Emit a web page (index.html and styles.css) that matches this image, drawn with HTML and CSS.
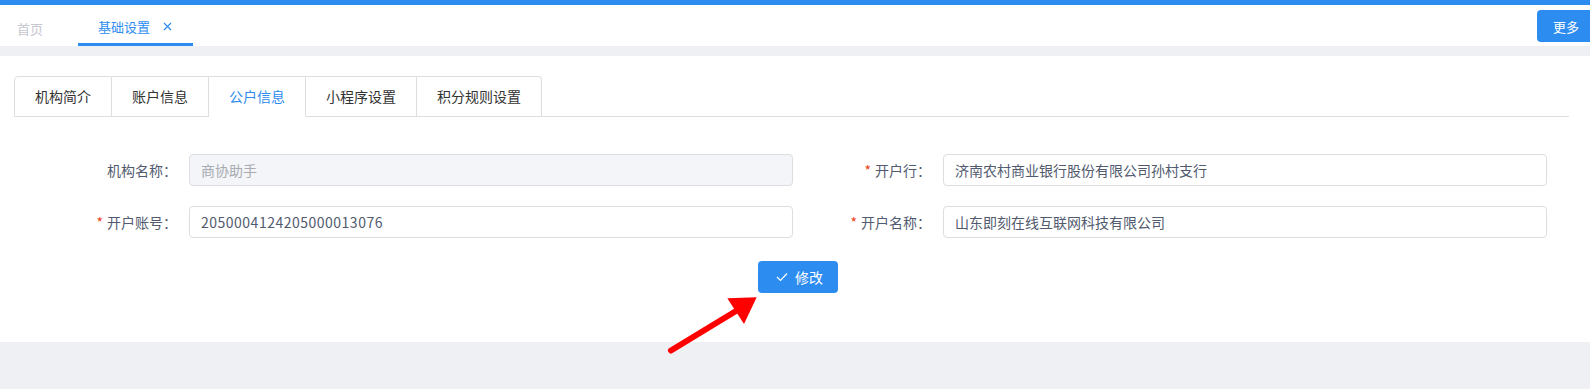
FILE: index.html
```html
<!DOCTYPE html>
<html lang="zh-CN">

<head>
    <meta charset="UTF-8">
    <meta name="viewport" content="width=device-width, initial-scale=1.0">
    <title>基础设置</title>
    <link rel="stylesheet" href="styles.css">
</head>

<body>
    <div class="ligne-haut"></div>

    <div class="barre-onglets">
        <div class="onglets-nav">
            <a class="onglet-accueil">首页</a>
            <a class="onglet-page actif">基础设置
                <svg class="icone-fermer" width="9" height="9" viewBox="0 0 9 9">
                    <path d="M1 1 L8 8 M8 1 L1 8" stroke="#2d8cf0" stroke-width="1.2" fill="none" />
                </svg>
            </a>
        </div>
        <button class="bouton-plus">更多</button>
    </div>

    <div class="contenu">
        <div class="panneau">
            <div class="onglets-carte">
                <div class="onglet">机构简介</div>
                <div class="onglet">账户信息</div>
                <div class="onglet actif">公户信息</div>
                <div class="onglet">小程序设置</div>
                <div class="onglet">积分规则设置</div>
            </div>

            <form class="formulaire">
                <div class="champ">
                    <label class="etiquette">机构名称：</label>
                    <input class="saisie" type="text" value="商协助手" disabled>
                </div>
                <div class="champ">
                    <label class="etiquette requis">开户行：</label>
                    <input class="saisie" type="text" value="济南农村商业银行股份有限公司孙村支行">
                </div>
                <div class="champ">
                    <label class="etiquette requis">开户账号：</label>
                    <input class="saisie chiffres" type="text" value="2050004124205000013076">
                </div>
                <div class="champ">
                    <label class="etiquette requis">开户名称：</label>
                    <input class="saisie" type="text" value="山东即刻在线互联网科技有限公司">
                </div>
            </form>

            <div class="actions">
                <button class="bouton-modifier" type="button">
                    <svg width="12" height="10" viewBox="0 0 12 10">
                        <path d="M1 5 L4.5 8.5 L11 1.5" stroke="#fff" stroke-width="1.2" fill="none" />
                    </svg>
                    修改
                </button>
            </div>
        </div>
    </div>

    <!-- flèche rouge d'annotation posée sur la capture -->
    <svg class="fleche" width="110" height="70" viewBox="0 0 110 70">
        <path d="M11 60.5 L76 21" stroke="#ff0000" stroke-width="6" stroke-linecap="round" fill="none" />
        <polygon points="96.7,7.3 67.3,8.3 84,34" fill="#ff0000" />
    </svg>
</body>

</html>
```

FILE: styles.css
```css
html {
    background-color: #eef0f4;
}

body {
    font-family: "Noto Sans CJK SC", "Liberation Sans", sans-serif;
    background-color: #eef0f4;
    margin: 0;
    padding: 0;
    position: relative;
    min-height: 389px;
    color: #515a6e;
}

.ligne-haut {
    height: 5px;
    background-color: #2d8cf0;
}

.barre-onglets {
    display: flex;
    justify-content: space-between;
    height: 41px;
    background-color: #fff;
}

.onglets-nav {
    display: flex;
}

.onglet-accueil,
.onglet-page {
    display: flex;
    align-items: center;
    box-sizing: border-box;
    height: 41px;
    padding-top: 5px;
    font-size: 13px;
    cursor: pointer;
}

.onglet-accueil {
    padding-left: 17px;
    padding-right: 35px;
    color: #c5c8ce;
}

.onglet-page {
    padding-left: 20px;
    padding-right: 21px;
    border-bottom: 3px solid #2d8cf0;
    color: #2d8cf0;
}

.icone-fermer {
    margin-left: 13px;
}

.bouton-plus {
    margin-top: 5px;
    width: 53px;
    height: 32px;
    padding: 0 0 0 16px;
    text-align: left;
    border: none;
    border-radius: 4px 0 0 4px;
    background-color: #2d8cf0;
    color: #fff;
    font-family: inherit;
    font-size: 13px;
}

.contenu {
    padding-top: 10px;
}

.panneau {
    box-sizing: border-box;
    height: 286px;
    padding: 20px 21px 0 14px;
    background-color: #fff;
}

.onglets-carte {
    display: flex;
    height: 40px;
    border-bottom: 1px solid #dcdee2;
}

.onglet {
    box-sizing: border-box;
    height: 41px;
    padding: 0 20px;
    line-height: 39px;
    border: 1px solid #dcdee2;
    border-left: none;
    background-color: #fff;
    color: #333;
    font-size: 14px;
    cursor: pointer;
}

.onglet:first-child {
    border-left: 1px solid #dcdee2;
    border-radius: 4px 0 0 0;
}

.onglet:last-child {
    border-radius: 0 4px 0 0;
}

.onglet.actif {
    color: #2d8cf0;
    border-bottom-color: #fff;
}

.formulaire {
    display: grid;
    grid-template-columns: 1fr 1fr;
    row-gap: 20px;
    margin-top: 37px;
    padding: 0 22px 0 25px;
}

.champ {
    display: flex;
    align-items: center;
}

.etiquette {
    box-sizing: border-box;
    width: 150px;
    padding-right: 12px;
    text-align: right;
    font-size: 14px;
    color: #515a6e;
}

.etiquette.requis::before {
    content: "*";
    margin-right: 4px;
    color: #ed4014;
}

.saisie {
    flex: 1;
    box-sizing: border-box;
    height: 32px;
    padding: 0 11px;
    border: 1px solid #dcdee2;
    border-radius: 4px;
    font-family: inherit;
    font-size: 14px;
    color: #515a6e;
    background-color: #fff;
}

.saisie.chiffres {
    letter-spacing: 0.5px;
}

.saisie:disabled {
    background-color: #f3f5f8;
    color: #a8abb2;
}

.actions {
    display: flex;
    justify-content: center;
    margin-top: 23px;
    padding-left: 12px;
}

.bouton-modifier {
    display: flex;
    align-items: center;
    justify-content: center;
    gap: 7px;
    width: 80px;
    height: 32px;
    padding: 0 0 0 4px;
    border: none;
    border-radius: 4px;
    background-color: #2d8cf0;
    color: #fff;
    font-family: inherit;
    font-size: 14px;
    cursor: pointer;
}

.fleche {
    position: absolute;
    left: 660px;
    top: 290px;
}
```
